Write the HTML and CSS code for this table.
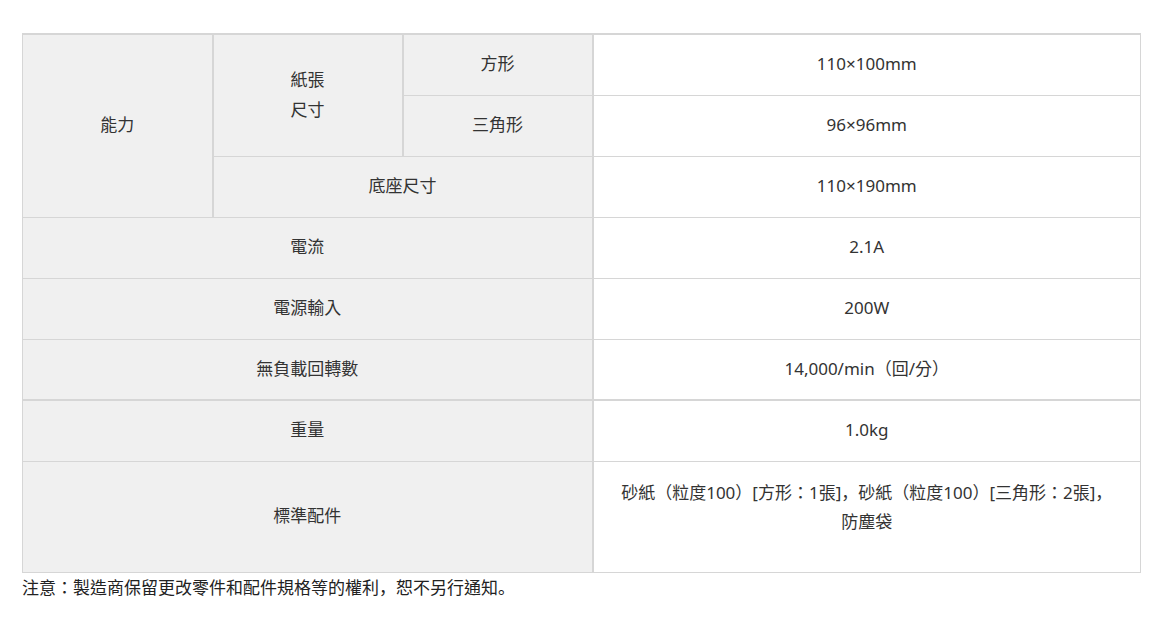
FILE: index.html
```html
<!DOCTYPE html>
<html lang="zh-Hant">
<head>
<meta charset="utf-8">
<link rel="stylesheet" href="styles.css">
</head>
<body>
<div class="page">
<table class="spec">
  <colgroup>
    <col class="c1"><col class="c2"><col class="c3"><col class="c4">
  </colgroup>
  <tbody>
    <tr class="r first">
      <th rowspan="3" class="edge-l">能力</th>
      <th rowspan="2">紙張<br>尺寸</th>
      <th>方形</th>
      <td class="edge-r">110×100mm</td>
    </tr>
    <tr class="r">
      <th>三角形</th>
      <td class="edge-r">96×96mm</td>
    </tr>
    <tr class="r">
      <th colspan="2">底座尺寸</th>
      <td class="edge-r">110×190mm</td>
    </tr>
    <tr class="r">
      <th colspan="3" class="edge-l">電流</th>
      <td class="edge-r">2.1A</td>
    </tr>
    <tr class="r">
      <th colspan="3" class="edge-l">電源輸入</th>
      <td class="edge-r">200W</td>
    </tr>
    <tr class="r">
      <th colspan="3" class="edge-l">無負載回轉數</th>
      <td class="edge-r">14,000/min（回/分）</td>
    </tr>
    <tr class="r thick">
      <th colspan="3" class="edge-l">重量</th>
      <td class="edge-r">1.0kg</td>
    </tr>
    <tr class="r tall">
      <th colspan="3" class="edge-l">標準配件</th>
      <td class="edge-r multi">砂紙（粒度100）[方形：1張]<span class="punct" lang="zh-Hans">，</span>砂紙（粒度100）[三角形：2張]<span class="punct" lang="zh-Hans">，</span><br>防塵袋</td>
    </tr>
  </tbody>
</table>
<p class="note">注意：製造商保留更改零件和配件規格等的權利<span class="punct" lang="zh-Hans">，</span>恕不另行通知<span class="punct" lang="zh-Hans">。</span></p>
</div>
</body>
</html>
```

FILE: styles.css
```css
html, body {
  margin: 0;
  padding: 0;
  background: #ffffff;
}
.page {
  padding: 33px 0 0 22px;
  font-family: "Noto Sans", "Noto Sans CJK TC", sans-serif;
  color: #333333;
  font-size: 17px;
}
.spec {
  border-collapse: collapse;
  width: 1119px;
  table-layout: fixed;
}
.c1, .c2, .c3 { width: 190px; }
.spec th, .spec td {
  border-style: solid;
  border-color: #d6d6d6;
  border-width: 1px 2px;
  text-align: center;
  vertical-align: middle;
  font-weight: normal;
  line-height: 30px;
  padding: 0 4px 1px;
  font-size: 17px;
}
.spec th {
  background: #f0f0f0;
}
.spec td {
  background: #ffffff;
}
.spec .edge-l { border-left-width: 1px; }
.spec .edge-r { border-right-width: 1px; }
.spec .first th, .spec .first td { border-top-width: 2px; }
.spec .thick th, .spec .thick td { border-top-width: 2px; }
.r { height: 61px; }
.tall { height: 111px; }
.spec td.multi {
  padding-bottom: 20px;
  line-height: 29px;
}
.punct {
  font-family: "Noto Sans CJK SC", sans-serif;
}
.note {
  margin: 0;
  padding-top: 1px;
  line-height: 26px;
  font-size: 17px;
  color: #222222;
}
```
